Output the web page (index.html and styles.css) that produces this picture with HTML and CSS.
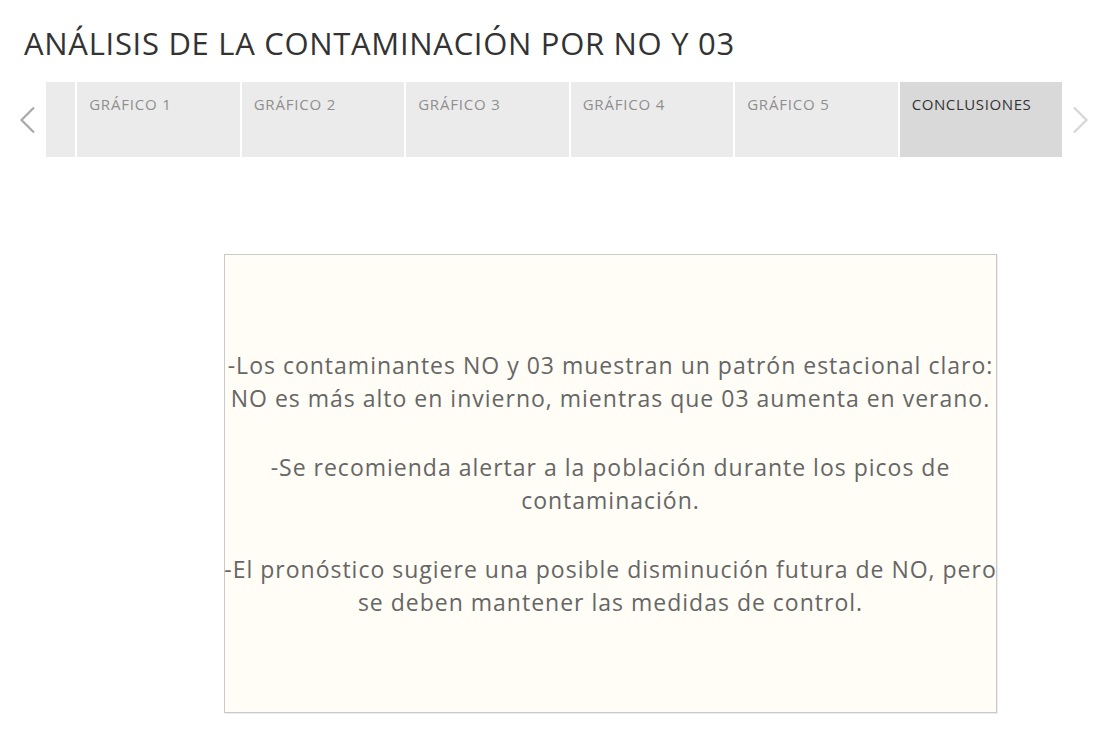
FILE: index.html
```html
<!DOCTYPE html>
<html lang="es">
<head>
<meta charset="utf-8">
<title>Análisis de la contaminación por NO y 03</title>
<link rel="stylesheet" href="styles.css">
</head>
<body>
<div class="story">
  <h1 class="story-title">ANÁLISIS DE LA CONTAMINACIÓN POR NO Y 03</h1>
  <nav class="story-nav">
    <div class="nav-arrow nav-arrow-left">
      <svg width="17" height="28" viewBox="0 0 17 28"><path d="M15 1.5 L2.5 14 L15 26.5" fill="none" stroke="#a9a9a9" stroke-width="2.2"/></svg>
    </div>
    <div class="tabs">
      <div class="tab tab-stub"></div>
      <div class="tab">GRÁFICO 1</div>
      <div class="tab">GRÁFICO 2</div>
      <div class="tab">GRÁFICO 3</div>
      <div class="tab">GRÁFICO 4</div>
      <div class="tab">GRÁFICO 5</div>
      <div class="tab tab-active">CONCLUSIONES</div>
    </div>
    <div class="nav-arrow nav-arrow-right">
      <svg width="17" height="28" viewBox="0 0 17 28"><path d="M2 1.5 L14.5 14 L2 26.5" fill="none" stroke="#d6d6d6" stroke-width="2.2"/></svg>
    </div>
  </nav>
  <section class="story-body">
    <div class="note">
      <p>-Los contaminantes NO y 03 muestran un patrón estacional claro:<br>NO es más alto en invierno, mientras que 03 aumenta en verano.</p>
      <p>-Se recomienda alertar a la población durante los picos de<br>contaminación.</p>
      <p>-El pronóstico sugiere una posible disminución futura de NO, pero<br>se deben mantener las medidas de control.</p>
    </div>
  </section>
</div>
</body>
</html>
```
FILE: styles.css
```css
html, body {
  margin: 0;
  padding: 0;
  background: #ffffff;
}
body {
  font-family: "Open Sans", "Noto Sans", sans-serif;
  width: 1108px;
  height: 744px;
  overflow: hidden;
}
.story-title {
  margin: 0;
  padding: 23px 0 0 24px;
  font-size: 31px;
  line-height: 40px;
  letter-spacing: 0.7px;
  font-weight: 400;
  color: #333333;
  white-space: nowrap;
}
.story-nav {
  margin-top: 19px;
  display: flex;
  height: 75px;
}
.nav-arrow {
  width: 47px;
  display: flex;
  align-items: center;
  justify-content: flex-start;
  box-sizing: border-box;
}
.nav-arrow-left {
  padding-left: 19px;
}
.nav-arrow-right {
  padding-left: 10px;
}
.tabs {
  display: flex;
  gap: 2px;
}
.tab {
  width: 162.5px;
  background: #ebebeb;
  box-sizing: border-box;
  padding: 12px 0 0 12px;
  font-size: 15px;
  line-height: 20px;
  letter-spacing: 0.8px;
  color: #8f8f8f;
  white-space: nowrap;
}
.tab-stub {
  width: 29px;
  padding: 0;
}
.tab-active {
  background: #d9d9d9;
  color: #333333;
  letter-spacing: 0.6px;
}
.story-body {
  margin-top: 97px;
  padding-left: 224px;
}
.note {
  width: 773px;
  height: 459px;
  box-sizing: border-box;
  background: #fffdf6;
  border: 1px solid #c9c9c9;
  box-shadow: 1px 1px 0 #ececec;
  display: flex;
  flex-direction: column;
  justify-content: center;
  align-items: center;
  gap: 36px;
  text-align: center;
  font-size: 23px;
  line-height: 33px;
  letter-spacing: 1px;
  color: #666666;
}
.note p {
  margin: 0;
  white-space: nowrap;
}
```
